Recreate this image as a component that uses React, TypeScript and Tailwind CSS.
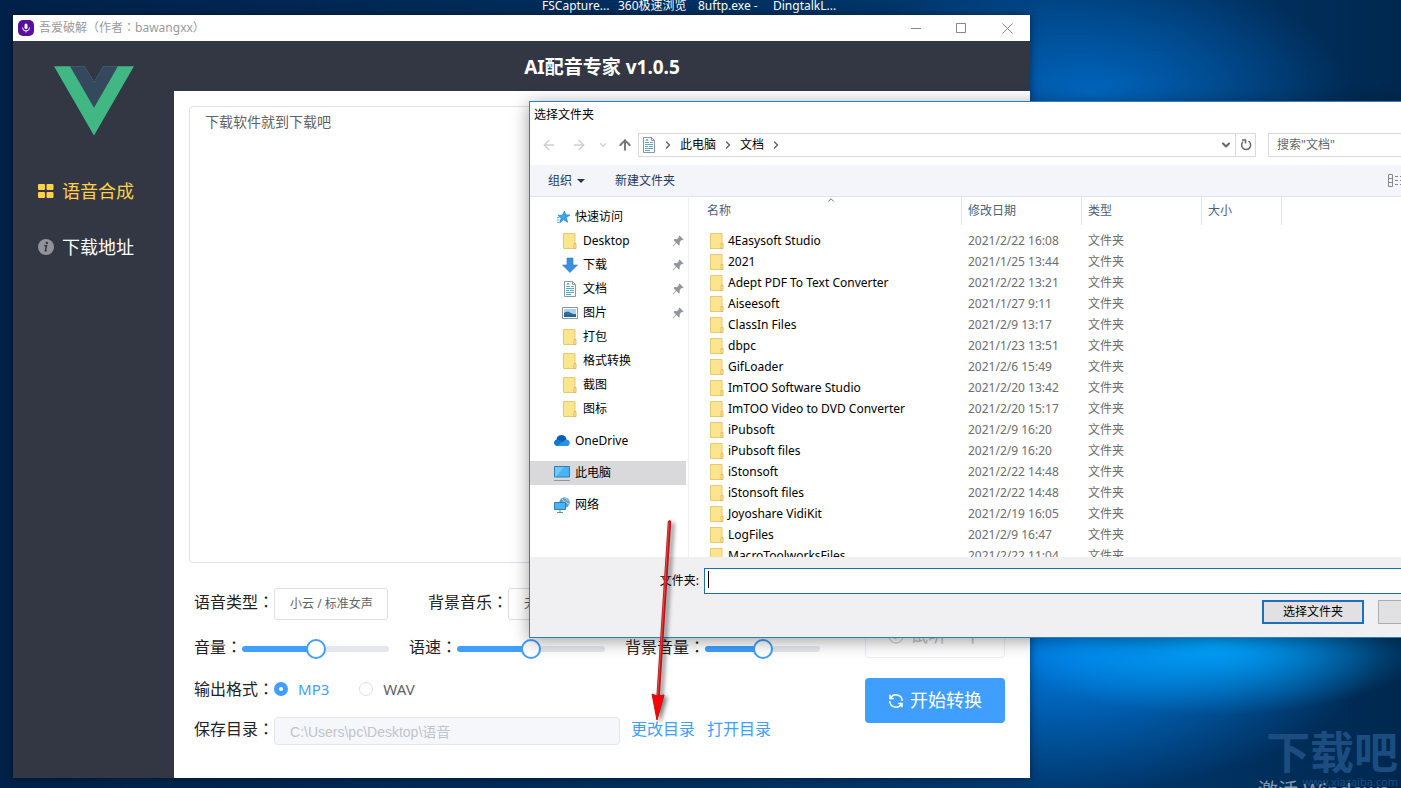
import React, { useState } from 'react';
import {
  LuArrowLeft,
  LuArrowRight,
  LuArrowUp,
  LuChevronDown,
  LuChevronRight,
  LuChevronUp,
} from 'react-icons/lu';

const DESKTOP_LABELS = [
  { name: 'FSCapture...', width: 'w-[76px]' },
  { name: '360极速浏览', width: 'w-[80px]' },
  { name: '8uftp.exe -', width: 'w-[75px]' },
  { name: 'DingtalkL...', width: 'w-[80px]' },
];

const FOLDERS = [
  { name: '4Easysoft Studio', date: '2021/2/22 16:08' },
  { name: '2021', date: '2021/1/25 13:44' },
  { name: 'Adept PDF To Text Converter', date: '2021/2/22 13:21' },
  { name: 'Aiseesoft', date: '2021/1/27 9:11' },
  { name: 'ClassIn Files', date: '2021/2/9 13:17' },
  { name: 'dbpc', date: '2021/1/23 13:51' },
  { name: 'GifLoader', date: '2021/2/6 15:49' },
  { name: 'ImTOO Software Studio', date: '2021/2/20 13:42' },
  { name: 'ImTOO Video to DVD Converter', date: '2021/2/20 15:17' },
  { name: 'iPubsoft', date: '2021/2/9 16:20' },
  { name: 'iPubsoft files', date: '2021/2/9 16:20' },
  { name: 'iStonsoft', date: '2021/2/22 14:48' },
  { name: 'iStonsoft files', date: '2021/2/22 14:48' },
  { name: 'Joyoshare VidiKit', date: '2021/2/19 16:05' },
  { name: 'LogFiles', date: '2021/2/9 16:47' },
  { name: 'MacroToolworksFiles', date: '2021/2/22 11:04' },
];

const FolderIcon = () => (
  <svg viewBox="0 0 14 16" className="h-4 w-3.5 shrink-0">
    <path d="M.5.5h11.500v15H.5z" fill="#fde48e" stroke="#e8c870" />
    <path d="M11 10.500h2v5h-2z" fill="#fbeab0" stroke="#e0bd5c" />
  </svg>
);

const DocumentIcon = () => (
  <svg viewBox="0 0 14 16" className="h-4 w-3.5 shrink-0" fill="none">
    <path d="M1.5.5h8l3 3v12h-11z" fill="#fff" stroke="#8c969e" />
    <path d="M9.5.5v3h3" stroke="#8c969e" />
    <path d="M3 5.5h4M8 5.5h3M3 7.5h8M3 9.5h3M7 9.5h4M3 11.5h8M3 13.5h5" stroke="#56a9cf" />
    <path d="M4 4l1-2 1 2" stroke="#56a9cf" />
  </svg>
);

const DownloadIcon = () => (
  <svg viewBox="0 0 16 16" className="size-4 shrink-0">
    <path d="M5 1h6v7h4.5L8 15.5.5 8H5z" fill="#3b8ede" stroke="#2c78c4" strokeWidth=".6" />
  </svg>
);

const PictureIcon = () => (
  <svg viewBox="0 0 16 16" className="size-4 shrink-0">
    <path d="M.5 2.5h15v11H.5z" fill="#fff" stroke="#8b969e" />
    <path d="M2 4h12v8H2z" fill="#a8d3f2" />
    <path d="M2 8c3-2 5-1 7 0s3 1 5 1v3H2z" fill="#3b6f86" />
    <path d="M2 10.5c4-1 8 0 12-.5v2H2z" fill="#2b5ea0" />
  </svg>
);

const StarIcon = () => (
  <svg viewBox="0 0 16 16" className="size-4 shrink-0">
    <path
      d="M9.5 2l1.200 3.800 4.300.3-3.600 2.500 1.200 4.700-3.900-2.600-4 3.100 1.500-4.700L3 6.500l4.300-.3z"
      fill="#3aa5ea"
      stroke="#2383c6"
      strokeWidth=".7"
    />
    <path d="M2 8.500h2.500M1.500 11h3M2 13.500h2" stroke="#5fb6ee" />
  </svg>
);

const CloudIcon = () => (
  <svg viewBox="0 0 16 16" className="size-4 shrink-0">
    <path d="M2.500 7A5 4.800 0 0 1 12.500 6.500L7 11z" fill="#0a5cb0" />
    <path d="M1.500 12.500A3.200 3.200 0 0 1 3.500 6.600c2 0 3 1 5 2.200l3 4.200H3c-.6 0-1-.2-1.500-.5z" fill="#1276d3" />
    <path d="M12 6.500a3.400 3.400 0 0 1 2.500 6c-.5.400-1 .5-1.600.5H3l6-4.200c1-.8 1.500-1.800 3-2.300z" fill="#2693e6" />
  </svg>
);

const ComputerIcon = () => (
  <svg viewBox="0 0 16 16" className="size-4 shrink-0">
    <path d="M.5 1.5h15V12H.5z" fill="#49b3f5" stroke="#2b7fb5" />
    <path d="M1 2h9L2 11.5H1z" fill="#6fcaff" />
    <path d="M0 15.5h16" stroke="#8c989f" />
  </svg>
);

const NetworkIcon = () => (
  <svg viewBox="0 0 16 16" className="size-4 shrink-0">
    <circle cx="10.5" cy="5.5" r="5.2" fill="#5f9fc4" />
    <path d="M8 2c2 1 1 3 3 3s2 2 4 2M10 1c2 0 4 2 4 3" stroke="#bfe0ef" fill="none" />
    <path d="M.5 5.5h11v7H.5z" fill="#49b3f5" stroke="#2b7fb5" />
    <path d="M6 13v2M3 15.5h6" stroke="#5b8ba8" />
  </svg>
);

const PinIcon = () => (
  <svg viewBox="0 0 12 12" className="size-3 shrink-0 fill-[#8e979f]">
    <path d="M7.5.5l4 4-1 .7-.8-.1-2 2 .1 2.400-1 .9L4.400 8 .8 11.400.5 11l3.300-3.600L1.500 5l.9-.9 2.500.1 2-2-.2-.8z" />
  </svg>
);

const VueLogo = () => (
  <svg viewBox="0 0 262 227" className="h-[70px] w-20">
    <path d="M161 0l-30 52.300L100.700 0H0l131 226.700L261.800 0z" fill="#41b883" />
    <path d="M161 0l-30 52.300L100.700 0H52.300L131 136 209.400 0z" fill="#34495e" />
  </svg>
);

const RefreshIcon = () => (
  <svg viewBox="0 0 16 16" className="size-4" fill="none" stroke="currentColor" strokeWidth="1.5">
    <path d="M2 1.800v3.700h3.700M2.500 5.200A6.200 6.200 0 0 1 14.200 8M1.800 8a6.200 6.200 0 0 0 11.700 2.800M14 14.200v-3.700h-3.700" />
  </svg>
);

const QUICK_ACCESS = [
  { name: 'Desktop', icon: FolderIcon, pinned: true },
  { name: '下载', icon: DownloadIcon, pinned: true },
  { name: '文档', icon: DocumentIcon, pinned: true },
  { name: '图片', icon: PictureIcon, pinned: true },
  { name: '打包', icon: FolderIcon, pinned: false },
  { name: '格式转换', icon: FolderIcon, pinned: false },
  { name: '截图', icon: FolderIcon, pinned: false },
  { name: '图标', icon: FolderIcon, pinned: false },
];

// The TC face centres full-width punctuation in its box
const Wide: React.FC<{ children: string }> = ({ children }) => (
  <span lang="zh-TW" className="font-['Noto_Sans_CJK_TC',sans-serif] leading-none">
    {children}
  </span>
);

interface SliderProps {
  id: string;
  label: string;
  className: string;
}

const Slider: React.FC<SliderProps> = ({ id, label, className }) => {
  const [value, setValue] = useState(50);

  return (
    <div className="flex items-center">
      <label htmlFor={id} className="pb-1 whitespace-nowrap">
        {label}
        <Wide>：</Wide>
      </label>
      <input
        id={id}
        type="range"
        value={value}
        onChange={(e) => setValue(Number(e.target.value))}
        className={`h-1.5 appearance-none rounded-full outline-none [&::-webkit-slider-thumb]:size-5 [&::-webkit-slider-thumb]:appearance-none [&::-webkit-slider-thumb]:rounded-full [&::-webkit-slider-thumb]:border-2 [&::-webkit-slider-thumb]:border-[#409eff] [&::-webkit-slider-thumb]:bg-white ${className}`}
        style={{ background: `linear-gradient(to right, #409eff ${value}%, #e4e7ed ${value}%)` }}
      />
    </div>
  );
};

const FormatRadio: React.FC<{ name: string; checked: boolean; onSelect: () => void }> = ({
  name,
  checked,
  onSelect,
}) => (
  <label className={`flex items-center gap-2.5 text-[15px] ${checked ? 'text-[#409eff]' : 'text-[#606266]'}`}>
    <input
      type="radio"
      name="format"
      checked={checked}
      onChange={onSelect}
      className="size-3.5 appearance-none rounded-full border border-[#dcdfe6] bg-white checked:border-5 checked:border-[#409eff]"
    />
    {name}
  </label>
);

const Desktop = () => (
  <>
    <div className="absolute inset-0 bg-[radial-gradient(ellipse_260px_130px_at_1090px_95px,#0065bdff,#0065bd00),radial-gradient(ellipse_210px_70px_at_1215px_645px,#00a4ffff,#00a4ff00),radial-gradient(ellipse_300px_150px_at_1080px_640px,#0080eaff,#0080ea00),linear-gradient(to_right,#002149,#00305f_50%,#003a72_75%,#00284f)]" />
    <div className="absolute top-0 left-[542px] flex text-[12px] leading-3 whitespace-nowrap text-white">
      {DESKTOP_LABELS.map((item) => (
        <span key={item.name} className={item.width}>
          {item.name}
        </span>
      ))}
    </div>
    <div className="absolute right-[3px] bottom-0 text-right text-[#1c4d80]">
      <div className="mb-1 text-[44px] leading-10 font-bold">下载吧</div>
      <div className="text-[11px] leading-3">www.xiazaiba.com</div>
    </div>
    <div className="absolute top-[779px] left-[1258px] text-[20px] leading-6 whitespace-nowrap text-[#8498ad]">
      激活 Windows
    </div>
  </>
);

const VoiceApp = () => {
  const [format, setFormat] = useState('MP3');
  const [text, setText] = useState('下载软件就到下载吧');

  return (
    <div className="absolute top-[15px] right-[371px] bottom-[10px] left-[13px] flex flex-col bg-[#323743] shadow-[0_0_8px_#00000080]">
      <div className="flex h-[26px] shrink-0 items-center bg-white pl-[5px] text-[12px] text-[#9a9a9a]">
        <span className="flex size-4 items-center justify-center rounded-[5px] bg-[#5a0f9c]">
          <svg viewBox="0 0 10 10" className="size-2.5">
            <rect x="3.5" y=".5" width="3" height="5.5" rx="1.5" fill="#fff" />
            <path d="M1.5 4.500a3.500 3.500 0 0 0 7 0M5 8v1.500" stroke="#fff" fill="none" />
          </svg>
        </span>
        <span className="ml-[5px]">
          吾爱破解<Wide>（</Wide>作者<Wide>：</Wide>bawangxx<Wide>）</Wide>
        </span>
        <div className="ml-auto flex text-[#888]">
          <button aria-label="最小化" className="flex w-[45px] justify-center">
            <svg viewBox="0 0 11 11" className="size-[11px]" stroke="currentColor">
              <path d="M0 5.500h10" />
            </svg>
          </button>
          <button aria-label="最大化" className="flex w-[45px] justify-center">
            <svg viewBox="0 0 11 11" className="size-[11px]" fill="none" stroke="currentColor">
              <path d="M.5.5h9v9h-9z" />
            </svg>
          </button>
          <button aria-label="关闭" className="flex w-[46px] justify-center">
            <svg viewBox="0 0 11 11" className="size-[11px]" stroke="currentColor">
              <path d="M.5.5l10 10M10.500.5l-10 10" />
            </svg>
          </button>
        </div>
      </div>

      <div className="flex min-h-0 flex-1">
        <aside className="w-[161px] shrink-0 pt-[25px]">
          <div className="flex justify-center">
            <VueLogo />
          </div>
          <nav className="mt-[27px] flex flex-col text-[18px]">
            <a href="#voice" className="flex h-14 items-center gap-2 pl-[25px] text-[#ffd04b]">
              <svg viewBox="0 0 16 16" className="size-4 fill-current">
                <rect x="0" y="1" width="7" height="6" rx="1" />
                <rect x="8.500" y="1" width="7" height="6" rx="1" />
                <rect x="0" y="9" width="7" height="6" rx="1" />
                <rect x="8.500" y="9" width="7" height="6" rx="1" />
              </svg>
              语音合成
            </a>
            <a href="#download" className="flex h-14 items-center gap-2 pl-[25px] text-white">
              <svg viewBox="0 0 16 16" className="size-4">
                <circle cx="8" cy="8" r="8" fill="#909399" />
                <circle cx="8.800" cy="4" r="1.200" fill="#323743" />
                <path d="M6.300 6.800h2.200l-1.200 5h1.500" stroke="#323743" strokeWidth="1.500" fill="none" />
              </svg>
              下载地址
            </a>
          </nav>
        </aside>

        <div className="flex min-w-0 flex-1 flex-col">
          <h1 className="flex h-[50px] shrink-0 items-center justify-center pt-0.5 text-[19px] font-bold text-white">
            AI配音专家 v1.0.5
          </h1>
          <main className="flex min-h-0 flex-1 flex-col bg-white px-[15px] pt-[15px] pb-[33px] text-base text-[#222]">
            <textarea
              aria-label="配音文本"
              value={text}
              onChange={(e) => setText(e.target.value)}
              className="min-h-0 flex-1 resize-none rounded border border-[#dcdfe6] px-[15px] py-[5px] text-[14px] leading-5 text-[#606266] outline-none"
            />
            <div className="mt-[25px] flex shrink-0 justify-between pr-2.5 pl-[5px]">
              <div className="w-[626px]">
                <div className="flex h-8 items-center">
                  <label htmlFor="voice" className="pb-1">
                    语音类型
                    <Wide>：</Wide>
                  </label>
                  <select
                    id="voice"
                    className="h-8 w-[114px] appearance-none rounded-[3px] border border-[#dcdfe6] bg-white px-[15px] text-[12px] text-[#606266]"
                  >
                    <option>小云 / 标准女声</option>
                  </select>
                  <label htmlFor="music" className="ml-10 pb-1">
                    背景音乐
                    <Wide>：</Wide>
                  </label>
                  <select
                    id="music"
                    className="h-8 w-[114px] appearance-none rounded-[3px] border border-[#dcdfe6] bg-white px-[15px] text-[12px] text-[#606266]"
                  >
                    <option>无</option>
                  </select>
                </div>
                <div className="mt-[13px] flex h-8 items-center gap-5">
                  <Slider id="volume" label="音量" className="w-[147px]" />
                  <Slider id="speed" label="语速" className="w-[148px]" />
                  <Slider id="music-volume" label="背景音量" className="w-[115px]" />
                </div>
                <div className="mt-2 flex h-8 items-center">
                  <span>
                    输出格式
                    <Wide>：</Wide>
                  </span>
                  <div className="flex gap-[30px]">
                    {['MP3', 'WAV'].map((name) => (
                      <FormatRadio
                        key={name}
                        name={name}
                        checked={format === name}
                        onSelect={() => setFormat(name)}
                      />
                    ))}
                  </div>
                </div>
                <div className="mt-3 flex h-7 items-center">
                  <label htmlFor="save-dir" className="pb-1">
                    保存目录
                    <Wide>：</Wide>
                  </label>
                  <input
                    id="save-dir"
                    disabled
                    value="C:\Users\pc\Desktop\语音"
                    className="h-7 w-[346px] rounded border border-[#e4e7ed] bg-[#f5f7fa] px-[15px] font-['Liberation_Sans','Noto_Sans_CJK_SC',sans-serif] text-[14px] text-[#c0c4cc]"
                  />
                  <a href="#change" className="ml-[11px] pb-1 text-[#409eff]">
                    更改目录
                  </a>
                  <a href="#open" className="ml-3 pb-1 text-[#409eff]">
                    打开目录
                  </a>
                </div>
              </div>
              <div className="flex w-[140px] flex-col gap-5 pt-[25px] text-[18px]">
                <button
                  disabled
                  className="flex h-[45px] items-center justify-center gap-1.5 rounded border border-[#ebeef5] text-[#c0c4cc]"
                >
                  <svg viewBox="0 0 16 16" className="size-4" fill="none" stroke="currentColor">
                    <circle cx="8" cy="8" r="7" />
                    <path d="M4.500 8.500L7.500 11l4-5" />
                  </svg>
                  试听一下
                </button>
                <button className="flex h-[45px] items-center justify-center gap-1.5 rounded bg-[#409eff] text-white">
                  <RefreshIcon />
                  开始转换
                </button>
              </div>
            </div>
          </main>
        </div>
      </div>
    </div>
  );
};

const FolderDialog = () => (
  <div className="absolute top-[101px] -right-[92px] bottom-[150px] left-[529px] flex flex-col border border-[#2a7fc0] bg-white text-[12px] text-black shadow-[0_3px_16px_#00000060]">
    <div className="h-[26px] shrink-0 pl-1 leading-[26px]">选择文件夹</div>

    <div className="flex h-[37px] shrink-0 items-center pr-3 pb-1 text-[#777]">
      <button aria-label="后退" className="ml-[11px] text-[#cfcfcf]">
        <LuArrowLeft className="size-4" />
      </button>
      <button aria-label="前进" className="ml-3.5 text-[#cfcfcf]">
        <LuArrowRight className="size-4" />
      </button>
      <button aria-label="最近" className="ml-[11px] text-[#cfcfcf]">
        <LuChevronDown className="size-2.5 stroke-3" />
      </button>
      <button aria-label="上移" className="mr-[5px] ml-[9px]">
        <LuArrowUp className="size-4 stroke-[3]" />
      </button>
      <div className="flex h-6 flex-1 items-center border border-[#d9d9d9] pl-[3px] text-black">
        <DocumentIcon />
        <LuChevronRight className="mx-1.5 size-3 stroke-3 text-[#666]" />
        <span>此电脑</span>
        <LuChevronRight className="mx-1.5 size-3 stroke-3 text-[#666]" />
        <span>文档</span>
        <LuChevronRight className="mx-1.5 size-3 stroke-3 text-[#666]" />
        <button aria-label="展开" className="mr-[3px] ml-auto">
          <LuChevronDown className="size-3 stroke-4 text-[#666]" />
        </button>
        <button
          aria-label="刷新"
          className="flex h-full w-5 items-center justify-center border-l border-[#d9d9d9]"
        >
          <svg viewBox="0 0 12 12" className="size-3" fill="none" stroke="#666" strokeWidth="1.500">
            <path d="M8.500 2.200A4.500 4.500 0 1 1 3 2.800M2 1h3.500v3.500" />
          </svg>
        </button>
      </div>
      <input
        aria-label="搜索"
        placeholder={'搜索"文档"'}
        className="ml-3 h-6 w-[212px] border border-[#d9d9d9] px-2 placeholder:text-[#666]"
      />
    </div>

    <div className="flex h-8 shrink-0 items-center border-b border-[#dfe3ea] bg-[#f4f5fa] pl-[18px] text-[#1e395b]">
      <button className="flex items-center gap-[5px]">
        组织
        <svg viewBox="0 0 8 4" className="h-1 w-2 fill-current">
          <path d="M0 0h8L4 4z" />
        </svg>
      </button>
      <button className="ml-[30px]">新建文件夹</button>
      <button aria-label="视图" className="mr-[88px] ml-auto">
        <svg viewBox="0 0 16 14" className="h-3.5 w-4" fill="none" stroke="#888">
          <path d="M.5.5h4v12h-4zM.5 4.500h4M.5 8.500h4M7 2.500h3M7 6.500h3M7 10.500h3M12 2.500h3M12 6.500h3M12 10.500h3" />
        </svg>
      </button>
    </div>

    <div className="flex min-h-0 flex-1">
      <nav className="w-[159px] shrink-0 overflow-hidden border-r border-[#f0f0f0] pt-2">
        <div className="flex h-6 items-center gap-1 pl-[25px]">
          <StarIcon />
          快速访问
        </div>
        {QUICK_ACCESS.map((item) => (
          <div key={item.name} className="flex h-6 items-center pl-8">
            <span className="flex w-4 shrink-0 justify-center">
              <item.icon />
            </span>
            <span className="ml-[5px]">{item.name}</span>
            {item.pinned && (
              <span className="mr-1 ml-auto">
                <PinIcon />
              </span>
            )}
          </div>
        ))}
        <div className="mt-2 flex h-6 items-center gap-[5px] pl-6">
          <CloudIcon />
          OneDrive
        </div>
        <div className="mt-2 mr-[2px] flex h-6 items-center gap-[5px] bg-[#d9d8da] pl-6">
          <ComputerIcon />
          此电脑
        </div>
        <div className="mt-2 flex h-6 items-center gap-[5px] pl-6">
          <NetworkIcon />
          网络
        </div>
      </nav>

      <div className="relative min-w-0 flex-1 overflow-hidden">
        <LuChevronUp className="absolute -top-0.5 left-[137px] size-2.5 text-[#555]" />
        <table className="table-fixed border-collapse text-left">
          <thead>
            <tr className="h-[33px] align-top leading-7 text-[#4c607a]">
              <th className="w-[273px] p-0 font-normal">
                <div className="h-7 border-r border-[#e5e5e5] pl-[18px]">名称</div>
              </th>
              <th className="w-[120px] p-0 font-normal">
                <div className="h-7 border-r border-[#e5e5e5] pl-1.5">修改日期</div>
              </th>
              <th className="w-[120px] p-0 font-normal">
                <div className="h-7 border-r border-[#e5e5e5] pl-1.5">类型</div>
              </th>
              <th className="w-20 p-0 font-normal">
                <div className="h-7 border-r border-[#e5e5e5] pl-1.5">大小</div>
              </th>
            </tr>
          </thead>
          <tbody>
            {FOLDERS.map((folder) => (
              <tr key={folder.name} className="h-[21px] leading-5 text-[#6d6d6d]">
                <td className="p-0 pl-[21px] text-black">
                  <div className="flex items-center gap-1">
                    <FolderIcon />
                    {folder.name}
                  </div>
                </td>
                <td className="p-0 pl-1.5">{folder.date}</td>
                <td className="p-0 pl-1.5">文件夹</td>
                <td />
              </tr>
            ))}
          </tbody>
        </table>
      </div>
    </div>

    <div className="h-20 shrink-0 bg-[#f0eff2] pt-[11px] pr-3">
      <div className="flex items-center">
        <label htmlFor="folder" className="w-[174px] pr-[5px] text-right">
          文件夹:
        </label>
        <div className="flex h-[26px] flex-1 items-start border border-[#1e6fae] bg-white pt-0.5 pl-[3px]">
          <span className="h-[17px] w-px bg-black" />
          <input id="folder" className="h-full flex-1 text-[14px] outline-none" />
        </div>
      </div>
      <div className="mt-1.5 flex justify-end gap-3.5">
        <button className="h-6 w-[102px] border-2 border-[#1f70b8] bg-[#e1e1e4]">选择文件夹</button>
        <button className="h-6 w-[102px] border border-[#adadad] bg-[#e1e1e4]">取消</button>
      </div>
    </div>
  </div>
);

// Red pointer from the dialog down to the change-folder link
const GuideArrow = () => (
  <svg
    viewBox="0 0 40 204"
    className="pointer-events-none absolute top-[518px] left-[642px] h-[204px] w-10 drop-shadow-[3px_2px_2px_#00000080]"
  >
    <path d="M27.500 4L16 180" stroke="#b8161b" strokeWidth="3.500" strokeLinecap="round" />
    <path d="M27 4L15.500 180" stroke="#e34a4a" />
    <path d="M10 176l5 2 7-1-7 25z" fill="#f00" stroke="#b8161b" />
  </svg>
);

export default function App() {
  return (
    <div
      lang="zh-CN"
      className="relative h-screen w-full overflow-clip bg-[#002149] font-['Noto_Sans','Noto_Sans_CJK_SC',sans-serif]"
    >
      <Desktop />
      <VoiceApp />
      <FolderDialog />
      <GuideArrow />
    </div>
  );
}
